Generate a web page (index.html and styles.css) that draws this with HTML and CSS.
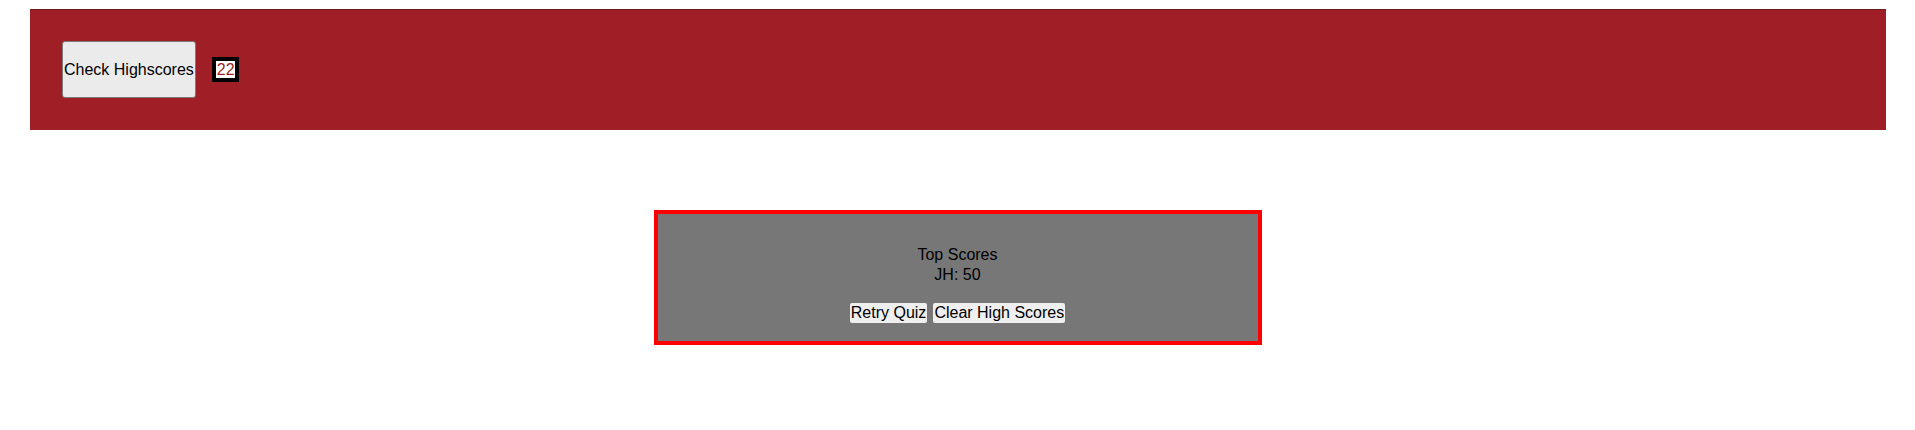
FILE: index.html
```html
<!DOCTYPE html>
<html lang="en">
<head>
<meta charset="utf-8">
<title>Quiz</title>
<link rel="stylesheet" href="styles.css">
</head>
<body>
<header class="topbar">
  <button class="hs-btn">Check Highscores</button>
  <span class="timer">22</span>
</header>
<main class="main">
  <section class="panel">
    <div class="scores">
      <div>Top Scores</div>
      <div>JH: 50</div>
    </div>
    <div class="actions">
      <button class="act-btn">Retry Quiz</button>
      <button class="act-btn">Clear High Scores</button>
    </div>
  </section>
</main>
</body>
</html>
```
FILE: styles.css
```css
html, body {
  margin: 0;
  padding: 0;
  background: #ffffff;
}
body {
  padding: 9px 8px 8px;
  font-family: "Liberation Sans", Arial, sans-serif;
  font-size: 16px;
  color: #000;
}
.topbar {
  margin: 0 21px 0 22px;
  background: #a01f27;
  padding: 31px 32px 32px;
  display: flex;
  align-items: center;
  gap: 16px;
  border-top: 1px solid #6b1c1f;
}
.hs-btn {
  font-family: "Liberation Sans", Arial, sans-serif;
  font-size: 16px;
  height: 57px;
  padding: 0 1px;
  background: #ebebeb;
  border: 1px solid #7a7a7a;
  border-radius: 3px;
  color: #000;
}
.timer {
  display: inline-block;
  border: 4px solid #000;
  background: #fff;
  color: #a01f27;
  line-height: 17px;
  padding: 0 0 0 1px;
}
.main {
  display: flex;
  justify-content: center;
  padding-top: 80px;
}
.panel {
  width: 600px;
  background: #777777;
  border: 4px solid #ff0000;
  padding: 31px 0 18px;
  text-align: center;
  display: flex;
  flex-direction: column;
  align-items: center;
  gap: 18px;
}
.scores {
  line-height: 20px;
}
.actions {
  display: flex;
  gap: 6px;
}
.act-btn {
  font-family: "Liberation Sans", Arial, sans-serif;
  font-size: 16px;
  height: 20px;
  padding: 0 1px;
  background: #efefef;
  border: none;
  border-radius: 2px;
  color: #000;
}
```
